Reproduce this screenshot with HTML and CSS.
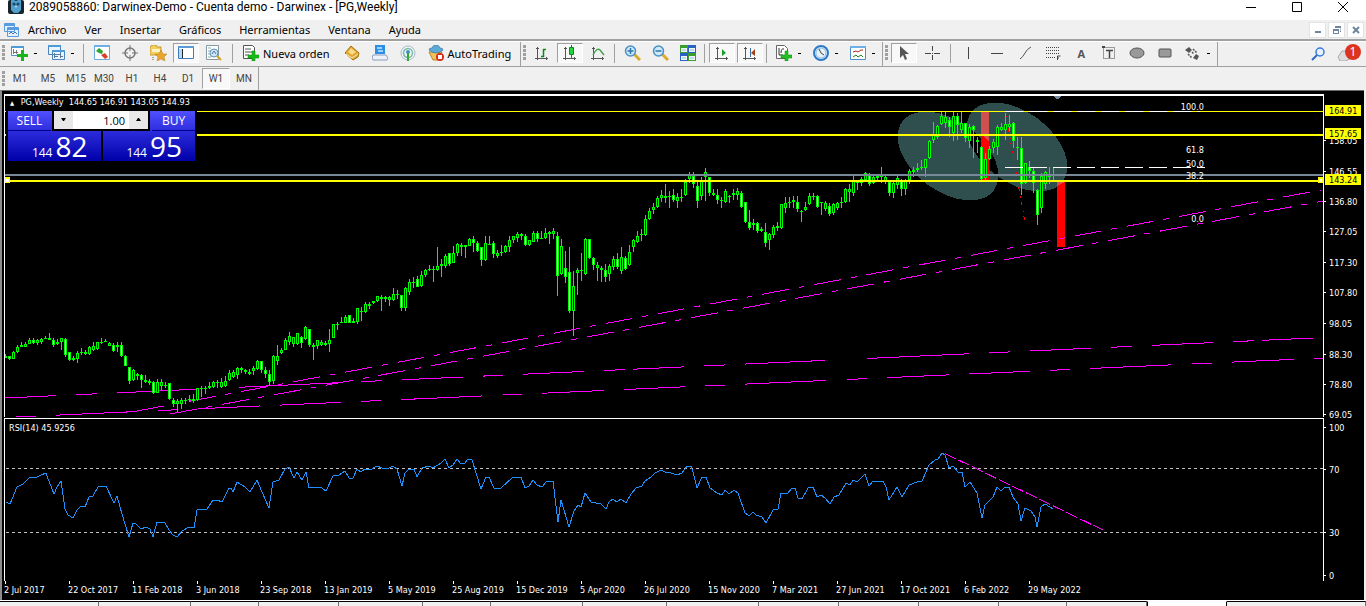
FILE: index.html
```html
<!DOCTYPE html>
<html lang="es">

<head>
    <meta charset="UTF-8">
    <meta name="viewport" content="width=device-width, initial-scale=1.0">
    <title>Darwinex - [PG,Weekly]</title>

    <link rel="stylesheet" href="styles.css">
</head>

<body>
    <div id="app">
        <header class="titlebar">
            <svg class="logo" width="16" height="14" viewBox="0 0 16 14">
                <rect width="16" height="14" rx="2" fill="#17242e"/>
                <path d="M3 0h3l2 1 2-1h3v10l-3 3H6l-3-3z" fill="#4f9ecb"/>
                <circle cx="6" cy="4" r="1.6" fill="#1d4a68"/><circle cx="10" cy="4" r="1.6" fill="#1d4a68"/>
                <path d="M7 6h2l-1 2z" fill="#d8eef8"/>
            </svg>
            <h1>2089058860: Darwinex-Demo - Cuenta demo - Darwinex - [PG,Weekly]</h1>
            <div class="window-buttons">
                <button aria-label="Minimizar"><svg width="10" height="10"><path d="M0 5.5h10" stroke="#000"/></svg></button>
                <button aria-label="Maximizar"><svg width="10" height="10"><path d="M.5 .5h9v9h-9z" fill="none" stroke="#000"/></svg></button>
                <button aria-label="Cerrar"><svg width="10" height="10"><path d="M0 0l10 10M10 0L0 10" stroke="#000"/></svg></button>
            </div>
        </header>

        <nav class="menubar">
            <svg class="menu-icon" width="15" height="14" viewBox="0 0 15 14">
                <path d="M.5 .5h10v8h-10zM3.5 4.5h11v9h-11z" fill="#e4f2ff" stroke="#5a9be0"/>
                <path d="M1 2h9M4 6h10" stroke="#5a9be0" stroke-width="2"/>
                <path d="M5 11l2-2 2 2 2-2 2 2" fill="none" stroke="#3f76c0"/>
            </svg>
            <button>Archivo</button>
            <button>Ver</button>
            <button>Insertar</button>
            <button>Gráficos</button>
            <button>Herramientas</button>
            <button>Ventana</button>
            <button>Ayuda</button>
            <div class="mdi-buttons">
                <button aria-label="Minimizar gráfico"><svg width="8" height="8"><path d="M1 6h6" stroke="#70859b" stroke-width="2"/></svg></button>
                <button aria-label="Restaurar gráfico"><svg width="8" height="8"><path d="M2 .5h6v5h-1M2 1.5h6" fill="none" stroke="#70859b"/><path d="M0 3h6v5H0z" fill="#70859b"/><path d="M1 5h4v2H1z" fill="#fff"/></svg></button>
                <button aria-label="Cerrar gráfico"><svg width="8" height="8"><path d="M1 1l6 6M7 1L1 7" stroke="#70859b" stroke-width="2"/></svg></button>
            </div>
        </nav>

        <div class="toolbar">
            <div class="group">
                <i class="grip"></i>
                <button class="tool drop" aria-label="Nuevo gráfico"><svg width="17" height="16"><path d="M.5 1.500h12v9H.5z" fill="#fff" stroke="#5590c4"/><path d="M0 2h13" stroke="#4f9bd8" stroke-width="2"/><path d="M2.500 4v5M2 7.500h5M5.500 5v4" stroke="#777"/><path d="M10 5h3v4h4v3h-4v4h-3v-4H6V9h4z" fill="#17b517"/></svg></button>
                <button class="tool drop" aria-label="Perfiles"><svg width="17" height="16"><path d="M.5 .5h12v9H.5zM4.500 5.500h12v9h-12z" fill="#eaf4fc" stroke="#4a85c0"/><path d="M0 1h13M4 6h13" stroke="#4f9bd8" stroke-width="2"/><path d="M6.500 8v5M6 11.500h4M12.500 9v4M12 11.500h3" fill="none" stroke="#5b7890"/></svg></button>
                <i class="sep"></i>
                <button class="tool" aria-label="Observación del mercado"><svg width="16" height="16"><path d="M.5 .5h15v14H.5z" fill="#fff" stroke="#6fa9dc"/><path d="M0 1h16" stroke="#6fb0e6" stroke-width="2"/><path d="M2 6l3-3 4 3-1 3-3-1z" fill="#2fa32f"/><path d="M7 10l4-2 3 4-3 2z" fill="#d6402a"/></svg></button>
                <button class="tool" aria-label="Ventana de datos"><svg width="16" height="16"><circle cx="8" cy="8" r="5" fill="none" stroke="#777" stroke-width="1.500"/><path d="M8 0v6M8 10v6M0 8h6M10 8h6" stroke="#777"/></svg></button>
                <button class="tool" aria-label="Navegador"><svg width="17" height="16"><path d="M0 2l2-2h4l1 2h4v8H0z" fill="#f3cf61" stroke="#c79a2c"/><path d="M2 4h8v3H2z" fill="#fff4bf"/><path d="M11 5l2 4h4l-3 3 1 4-4-2-4 2 1-4-3-3h4z" fill="#e9a52c" stroke="#b87a18" stroke-width=".5"/><path d="M3 12v3" stroke="#555" stroke-dasharray="1"/></svg></button>
                <button class="tool pressed" aria-label="Terminal"><svg width="16" height="14"><path d="M.5 .5h15v12H.5z" fill="#fff" stroke="#3e7cc0"/><path d="M0 1h16" stroke="#5b9ad6" stroke-width="2"/><path d="M4.500 3v9" stroke="#222"/><path d="M1 3h3v9H1z" fill="#b7d7f2"/></svg></button>
                <button class="tool" aria-label="Probador de estrategias"><svg width="16" height="16"><path d="M.5 .5h12v14H.5z" fill="#fff" stroke="#8899a5"/><path d="M2 3h3M2 6h3M2 9h2M2 12h3" stroke="#8aa"/><circle cx="8" cy="8" r="4" fill="#cfe6f7" stroke="#5d92b8"/><path d="M6 9l2-3 2 3" fill="none" stroke="#4878a0"/><path d="M11 11l4 4" stroke="#d9a21b" stroke-width="2"/></svg></button>
                <i class="sep"></i>
                <button class="tool wide"><svg width="16" height="16"><path d="M.5 .5h9l2 2v11H.5z" fill="#fff" stroke="#555"/><path d="M2 4h6M2 7h7M2 10h4" stroke="#555"/><path d="M9 6h3v4h4v3h-4v3H9v-3H5v-3h4z" fill="#16bb16" stroke="#0b8a0b" stroke-width=".5"/></svg>Nueva orden</button>
                <button class="tool" aria-label="MetaEditor"><svg width="16" height="16"><path d="M1 8l6-7 8 7-1 4-5 3z" fill="#e0a62e" stroke="#a8700f"/><path d="M4 7l3-4 5 4-4 3z" fill="#fbd985"/><path d="M2 9l6 4 6-4" fill="none" stroke="#fff1c0"/></svg></button>
                <button class="tool" aria-label="Equipo"><svg width="16" height="16"><path d="M3 0h10v9H3z" fill="#2b8fe8"/><path d="M5 2h5v2H5zM6 5h5v2H6z" fill="#9fd3fa"/><path d="M1 10h13l2 3-1 2H1l-1-2z" fill="#eef2f8" stroke="#8a9cc0"/></svg></button>
                <button class="tool" aria-label="Señales"><svg width="16" height="16"><circle cx="8" cy="8" r="7" fill="#eef5f5" stroke="#a9bcc6"/><circle cx="8" cy="8" r="4.500" fill="none" stroke="#7fb7a5" stroke-width="1.500"/><circle cx="8" cy="7" r="2" fill="#3c8fd0"/><path d="M8 8v8" stroke="#36a83a" stroke-width="2"/></svg></button>
                <button class="tool wide"><svg width="16" height="16"><path d="M1 7h13l-3 8H5z" fill="#f2c25a" stroke="#b98324"/><path d="M1 5q0-2 3-2 1-3 4-3t4 3q3 0 3 2-3 3-7 3T1 5z" fill="#5fa9d6" stroke="#35779f" stroke-width=".7"/><circle cx="12" cy="12" r="4" fill="#d92b1c"/><path d="M10 10h4v4h-4z" fill="#fff"/></svg>AutoTrading</button>
            </div>
            <div class="group">
                <i class="grip"></i>
                <button class="tool" aria-label="Barras"><svg width="16" height="16"><use href="#axes"/><path d="M9.500 4v8M9 4.500h3M7 11.500h3" stroke="#0a8a1a" stroke-width="1.500"/></svg></button>
                <button class="tool pressed" aria-label="Velas"><svg width="16" height="16"><use href="#axes"/><path d="M9.500 0v13" stroke="#0a8a1a"/><path d="M7.500 2.500h4v7h-4z" fill="#26d43c" stroke="#0a8a1a"/></svg></button>
                <button class="tool" aria-label="Línea"><svg width="16" height="16"><use href="#axes"/><path d="M3 10q4-8 7-5l4 5" fill="none" stroke="#45a04f" stroke-width="1.500"/></svg></button>
                <i class="sep narrow"></i>
                <button class="tool" aria-label="Acercar"><svg width="17" height="16"><path d="M10 9l6 6" stroke="#d9ac2b" stroke-width="3"/><circle cx="6.500" cy="6" r="5" fill="#cfe9fb" stroke="#4a90c2" stroke-width="1.500"/><path d="M3.500 6h6M6.500 3v6" stroke="#2d77ad" stroke-width="1.500"/></svg></button>
                <button class="tool" aria-label="Alejar"><svg width="17" height="16"><path d="M10 9l6 6" stroke="#d9ac2b" stroke-width="3"/><circle cx="6.500" cy="6" r="5" fill="#cfe9fb" stroke="#4a90c2" stroke-width="1.500"/><path d="M3.500 6h6" stroke="#2d77ad" stroke-width="1.500"/></svg></button>
                <button class="tool" aria-label="Mosaico"><svg width="16" height="16"><path d="M0 0h8v8H0z" fill="#3a9d2c"/><path d="M8 0h8v8H8z" fill="#2962c4"/><path d="M0 8h8v8H0z" fill="#2962c4"/><path d="M8 8h8v8H8z" fill="#3a9d2c"/><path d="M1 3h6v4H1zM9 3h6v4H9zM1 11h6v4H1zM9 11h6v4H9z" fill="#eef6ff"/><path d="M2 5h4M10 5h4M2 13h4M10 13h4" stroke="#9bc" /></svg></button>
                <i class="sep narrow"></i>
                <button class="tool pressed" aria-label="Desplazar"><svg width="16" height="16"><use href="#axes"/><path d="M8 4v7l4-3z" fill="#18a02a"/></svg></button>
                <button class="tool pressed" aria-label="Autodesplazar"><svg width="16" height="16"><use href="#axes"/><path d="M8.500 3v9" stroke="#3a6ea5"/><path d="M13 4v7l-4-3z" fill="#a5401c"/></svg></button>
                <i class="sep narrow"></i>
                <button class="tool drop" aria-label="Indicadores"><svg width="16" height="16"><path d="M.5 .5h8l3 3v10H.5z" fill="#fff" stroke="#666"/><path d="M3 3v7h4M5 8q0-5 3-4" fill="none" stroke="#333"/><path d="M9 6h3v4h4v3h-4v3H9v-3H5v-3h4z" fill="#1fc421" stroke="#0b8a0b" stroke-width=".5"/></svg></button>
                <button class="tool drop" aria-label="Períodos"><svg width="16" height="16"><circle cx="8" cy="8" r="7" fill="#e8f2fa" stroke="#2c79c9" stroke-width="2"/><circle cx="8" cy="8" r="5" fill="none" stroke="#8cbbe3"/><path d="M6 4l2 4 3 2" fill="none" stroke="#444"/></svg></button>
                <button class="tool drop" aria-label="Plantillas"><svg width="16" height="14"><path d="M.5 .5h15v13H.5z" fill="#fff" stroke="#4c8fcb"/><path d="M0 1h16" stroke="#6fb0e6" stroke-width="2"/><path d="M3 6l3-1 2 1 3-2h2" fill="none" stroke="#a3301c"/><path d="M3 11l3-2 2 2 3-2 2 2" fill="none" stroke="#15851e"/></svg></button>
            </div>
            <div class="group">
                <i class="grip"></i>
                <button class="tool pressed" aria-label="Cursor"><svg width="16" height="16"><path d="M4 1v12l3-3 2 5 2-1-2-5h4z" fill="#555"/></svg></button>
                <button class="tool" aria-label="Cruz"><svg width="16" height="16"><path d="M8.500 1v5M8.500 10v5M1 8.500h6M10 8.500h6M8 8.500h1" stroke="#444"/></svg></button>
                <i class="sep"></i>
                <button class="tool" aria-label="Línea vertical"><svg width="16" height="16"><path d="M7.500 2v12" stroke="#444"/></svg></button>
                <button class="tool" aria-label="Línea horizontal"><svg width="16" height="16"><path d="M2 8.500h12" stroke="#444"/></svg></button>
                <button class="tool" aria-label="Línea de tendencia"><svg width="16" height="16"><path d="M3 14q3-2 5-6t6-6" fill="none" stroke="#555"/></svg></button>
                <button class="tool" aria-label="Fibonacci"><svg width="16" height="16"><path d="M1 2.500h14M1 5.500h14M1 8.500h14M1 12.500h9" stroke="#444" stroke-dasharray="1 1"/><path d="M12.500 15v-4h3M12 13h2" fill="none" stroke="#444"/></svg></button>
                <button class="tool letter">A</button>
                <button class="tool" aria-label="Etiqueta de texto"><svg width="16" height="16"><path d="M2.500 2.500h11v11h-11z" fill="none" stroke="#444" stroke-dasharray="1 1"/><path d="M5 5.500h7M8.500 5v8" stroke="#444" stroke-width="1.500"/><path d="M1 1h3v2H1z" fill="#444"/></svg></button>
                <button class="tool" aria-label="Elipse"><svg width="16" height="16"><ellipse cx="8" cy="8" rx="7" ry="5" fill="#999" stroke="#555"/></svg></button>
                <button class="tool" aria-label="Rectángulo"><svg width="16" height="16"><rect x="2" y="4" width="12" height="8" rx="1" fill="#999" stroke="#555"/></svg></button>
                <button class="tool drop" aria-label="Flechas"><svg width="16" height="16"><path d="M4 2l3 3-3 3-4-3zM11 9l3 2-2 4-4-2z" fill="#555"/><path d="M3 9l4 4M8 4l4 4M7 7l2 2" stroke="#555" stroke-width="1.500" stroke-dasharray="2 1"/></svg></button>
            </div>
            <div class="status">
                <button class="tool" aria-label="Buscar"><svg width="16" height="16"><circle cx="9" cy="6" r="4" fill="#e5f1ff" stroke="#3a78d8" stroke-width="1.500"/><path d="M6 9l-5 5" stroke="#2f67c4" stroke-width="2"/></svg></button>
                <button class="tool alerts" aria-label="Alertas"><svg width="20" height="14"><path d="M1 10l4-6h9v7l-5 3H3z" fill="#ddd" stroke="#aaa"/></svg><span class="badge">1</span></button>
            </div>
        </div>

        <div class="timeframes">
            <i class="grip"></i>
            <button>M1</button>
            <button>M5</button>
            <button>M15</button>
            <button>M30</button>
            <button>H1</button>
            <button>H4</button>
            <button>D1</button>
            <button class="pressed">W1</button>
            <button>MN</button>
        </div>

        <main class="chart">
            <svg class="plot" shape-rendering="crispEdges">
                <defs>
                    <g id="axes"><path d="M3.500 2v13M1 13.500h13M2 3.500h3M12.500 12v3" stroke="#555" fill="none"/></g>
                </defs>
                <g transform="translate(-4 -94)">
                    <!-- ellipses, overlap stays black -->
                    <path d="M902 122A57 35 37 1 1 994 190A57 35 37 1 1 902 122ZM971 113A57 35 37 1 1 1063 181A57 35 37 1 1 971 113Z" fill="#2f4f4f" fill-rule="evenodd"/>
                    <path d="M981 112h8v68h-8zM1057 182h8v65h-8z" fill="#f00"/>
                    <path d="M981 112h8v30l-8-8zM1057 182h8l-8 4z" fill="#d05050"/>

                    <g id="trends" fill="none" stroke="#f0f"></g>
                    <path d="M1005.500 113l20 112" fill="none" stroke="#f00" stroke-dasharray="4 5 2 4"/>

                    <g id="candles"></g>

                    <!-- levels -->
                    <rect x="4" y="111" width="100%" height="1" fill="#ff0"/>
                    <path d="M1005 111.500h195" stroke="#fff" stroke-dasharray="18 6"/>
                    <rect x="4" y="134" width="100%" height="2" fill="#ff0"/>
                    <rect x="4" y="174" width="100%" height="2" fill="#778899"/>
                    <path d="M1005 167.500h200" stroke="#fff" stroke-dasharray="18 6"/>
                    <rect x="4" y="180" width="100%" height="2" fill="#ff0"/>
                    <path d="M5 177h5v6H5zM1318 177h5v6h-5z" fill="#ff0"/>
                    <path d="M6 179h3v3H6zM1319 179h3v3h-3z" fill="#fff"/>
                    <path d="M1053 96h9l-4 3h-1z" fill="#778899"/>

                    <g class="fibo">
                        <text x="1204" y="110">100.0</text>
                        <text x="1204" y="153">61.8</text>
                        <text x="1204" y="167">50.0</text>
                        <text x="1204" y="179">38.2</text>
                        <text x="1204" y="222">0.0</text>
                    </g>

                    <!-- frame -->
                    <rect x="4" y="94" width="100%" height="2" fill="#fff"/>
                    <rect x="4" y="94" width="1" height="323" fill="#fff"/>
                    <rect x="4" y="418" width="100%" height="1" fill="#fff"/>
                    <rect x="4" y="418" width="1" height="163" fill="#fff"/>

                    <!-- RSI -->
                    <svg x="6" y="420" width="100%" height="160">
                        <path d="M0 48.500h4000M0 112.500h4000" stroke="#c0c0c0" stroke-dasharray="3 3"/>
                    </svg>
                    <polyline id="rsi" fill="none" stroke="#1e90ff"/>
                    <path d="M945 453.500L1103 530" stroke="#f0f" stroke-dasharray="12 3"/>
                    <text x="9" y="431">RSI(14) 45.9256</text>

                    <g id="dates"></g>
                </g>
            </svg>

            <svg class="scale" shape-rendering="crispEdges">
                <g id="prices" transform="translate(0 -94)">
                    <path d="M0 94h1v323H0zM0 418h1v163H0z" fill="#fff"/>
                </g>
            </svg>

            <section class="oneclick">
                <p class="symbol"><span class="arrow">▲</span> PG,Weekly&nbsp; 144.65 146.91 143.05 144.93</p>
                <div class="deal">
                    <button class="side sell"><span>SELL</span><b><small>144</small>82</b></button>
                    <button class="side buy"><span>BUY</span><b><small>144</small>95</b></button>
                    <div class="volume">
                        <button class="step" aria-label="Bajar volumen"><svg width="5" height="4"><path d="M0 0h5L3 3H2z"/></svg></button>
                        <input type="text" value="1.00" aria-label="Volumen">
                        <button class="step" aria-label="Subir volumen"><svg width="5" height="4"><path d="M2 0h1l2 3H0z"/></svg></button>
                    </div>
                </div>
            </section>
        </main>

        <footer class="tabs" id="tabs"></footer>
    </div>

    <script src="script.js"></script>
</body>

</html>
```
FILE: styles.css
```css
* {
    padding: 0;
    margin: 0;
    box-sizing: border-box;
}

body {
    font-family: "Noto Sans", "Open Sans", sans-serif;
    font-size: 11px;
    color: #000;
    overflow: hidden;
}

button {
    border: 0;
    background: none;
    font: inherit;
    color: inherit;
}

svg {
    display: block;
    flex: none;
}

#app {
    height: 100vh;
    display: flex;
    flex-direction: column;
    background-color: #f0f0f0;
}

/* title bar */

.titlebar {
    height: 20px;
    flex: none;
    display: flex;
    align-items: flex-start;
    padding-left: 8px;
    background-color: #fff;
}

.titlebar h1 {
    margin-left: 5px;
    font-family: Roboto, sans-serif;
    font-size: 12px;
    line-height: 14px;
    font-weight: normal;
}

.window-buttons {
    margin-left: auto;
    display: flex;
}

.window-buttons button {
    width: 46px;
    height: 14px;
    display: flex;
    align-items: center;
    justify-content: center;
}

/* menu */

.menubar {
    height: 21px;
    flex: none;
    display: flex;
    align-items: center;
    padding-left: 4px;
    border-bottom: 2px solid #a0a0a0;
}

.menubar>button {
    padding: 0 9px;
    line-height: 18px;
}

.mdi-buttons {
    margin-left: auto;
    margin-right: 2px;
    display: flex;
    gap: 2px;
}

.mdi-buttons button {
    width: 17px;
    height: 16px;
    display: flex;
    align-items: center;
    justify-content: center;
    background-color: #fff;
    border: 1px solid #e3e3e3;
}

/* toolbars */

.toolbar {
    height: 26px;
    flex: none;
    display: flex;
    border-top: 1px solid #fff;
    border-bottom: 1px solid #a0a0a0;
}

.group {
    display: flex;
    align-items: center;
    padding-right: 1px;
    padding-bottom: 2px;
    border-right: 1px solid #a0a0a0;
}

.grip {
    width: 3px;
    height: 16px;
    margin: 0 2px;
    background: repeating-linear-gradient(#a0a0a0 0 3px, transparent 3px 4px);
}

.group:first-child .grip {
    margin-right: 0;
}

.tool {
    width: 28px;
    height: 20px;
    display: flex;
    align-items: center;
    justify-content: center;
}

.tool.drop {
    width: 37px;
    justify-content: flex-start;
    padding-left: 6px;
    gap: 6px;
}

.tool.drop::after {
    content: "";
    width: 3px;
    height: 1px;
    background-color: #000;
}

.tool.wide {
    width: auto;
    padding: 0 8px 0 6px;
    gap: 4px;
}

.tool.letter {
    font-weight: bold;
    color: #555;
}

.tool.pressed {
    width: 26px;
    margin: 0 1px;
}

.pressed {
    background-color: #f8f8f8;
    border: 1px solid #fff;
    border-top-color: #a0a0a0;
    border-left-color: #a0a0a0;
}

.sep {
    width: 1px;
    height: 19px;
    margin: 0 4px;
    background-color: #a0a0a0;
}

.sep.narrow {
    margin: 0 3px 0 2px;
}

.status {
    margin-left: auto;
    margin-right: 5px;
    display: flex;
    align-items: center;
}

.alerts {
    position: relative;
}

.badge {
    position: absolute;
    right: 0;
    top: 0;
    width: 16px;
    height: 16px;
    border-radius: 8px;
    background-color: #dd3420;
    color: #fff;
    font-size: 12px;
    line-height: 15px;
    text-align: center;
}

.timeframes {
    height: 23px;
    flex: none;
    display: flex;
    align-items: center;
    align-self: flex-start;
    border-right: 1px solid #a0a0a0;
    font-family: Roboto, sans-serif;
    font-size: 10px;
    color: #444;
}

.timeframes .grip {
    margin-right: 1px;
}

.timeframes button {
    width: 28px;
    height: 21px;
}

/* chart */

.chart {
    flex: 1;
    min-height: 0;
    display: flex;
    position: relative;
    padding: 3px 0 0 2px;
    margin-right: 2px;
    background-color: #000;
    border-top: 1px solid #696969;
    border-left: 2px solid #8c8c8c;
    font-family: "DejaVu Sans Condensed", "DejaVu Sans", sans-serif;
    font-size: 9px;
    color: #fff;
}

.chart text {
    fill: #fff;
}

.plot {
    flex: 1;
    min-width: 0;
    height: 100%;
}

.scale {
    width: 41px;
    height: 100%;
}

.chart .fibo text {
    text-anchor: end;
}

.chart .mark text {
    fill: #000;
}

.oneclick {
    position: absolute;
    left: 2px;
    top: 5px;
}

.symbol {
    height: 15px;
    line-height: 12px;
    padding-left: 6px;
}

.arrow {
    font-size: 6px;
    margin-right: 4px;
}

.deal {
    display: flex;
    gap: 2px;
    width: 191px;
    margin-left: 2px;
    padding: 0 2px 2px;
    background-color: #000;
    font-family: "Open Sans", sans-serif;
}

.side {
    flex: 1;
    height: 50px;
    display: flex;
    flex-direction: column;
    background: linear-gradient(#5050ff, #2828d8 45%, #0000a8);
    color: #fff;
}

.side span {
    width: 43px;
    height: 20px;
    line-height: 20px;
    font-size: 12px;
    border-bottom: 1px solid #000090;
}

.buy span {
    align-self: flex-end;
}

.side b {
    align-self: flex-end;
    padding-right: 13px;
    font-size: 28px;
    line-height: 30px;
    font-weight: normal;
}

.side small {
    font-size: 12px;
    margin-right: 3px;
}

.volume {
    position: absolute;
    left: 48px;
    top: 15px;
    width: 98px;
    height: 20px;
    display: flex;
    padding: 0 2px 2px;
    background-color: #000;
}

.step {
    width: 19px;
    display: flex;
    align-items: center;
    justify-content: center;
    background-color: #e8e8e8;
}

.volume input {
    flex: 1;
    min-width: 0;
    border: 0;
    padding-right: 4px;
    background-color: #fff;
    font-family: "Open Sans", sans-serif;
    font-size: 11px;
    text-align: right;
}

/* chart tabs */

.tabs {
    height: 6px;
    flex: none;
    display: flex;
    border-top: 1px solid #fff;
}

.tabs span {
    flex: none;
    border-top: 1px solid #000;
    border-right: 1px solid #707070;
}

.tabs .active {
    background-color: #fff;
    border-top-color: #fff;
    border-right: 1px solid #000;
    border-left: 1px solid #000;
}

.tabs .rest {
    flex: 1;
}
```
FILE: script.js
```js
const $ = document.querySelector.bind(document)

// high, open/close top, open/close bottom, low; "w" marks a falling candle
const candles = `354,356,358,358 356,356,359,360w 351,352,359,359 345,347,352,353 342,345,347,347 342,344,347,347
338,340,344,344 338,340,343,344w 339,340,343,345 338,339,342,344 336,338,339,339 333,338,340,340
338,340,345,347w 339,342,344,345 338,338,342,350 338,339,355,357w 352,352,360,361w 356,358,360,361
351,353,359,363 348,352,353,355 350,352,354,355 346,347,354,355 342,346,350,351 342,342,349,350
338,342,342,344 339,341,341,342 342,343,346,346 343,345,351,352w 342,345,347,352 342,345,356,357w
355,356,366,366w 367,367,381,384w 369,370,380,381 373,374,376,380 374,375,380,388w 375,380,382,383
379,381,383,385 381,382,393,394w 379,382,393,393 379,382,386,390 382,385,386,388 383,383,399,400w
398,400,404,407w 399,401,404,412 398,400,404,409 398,400,401,404 395,399,400,402 394,399,401,403
388,388,400,401 386,388,389,397 386,388,389,394 382,386,388,389 381,382,387,388 380,382,383,388
378,382,387,388 376,381,386,387 370,373,380,381 370,372,377,378 367,368,375,379 367,368,370,373
369,370,372,374 369,372,374,375 366,368,371,375 360,361,369,370 361,361,370,373w 367,370,374,378w
370,374,382,386w 355,356,381,384 345,356,361,365 348,350,353,354 338,340,350,350 332,336,342,345
337,337,344,347 333,333,344,345 336,337,343,348w 326,327,339,340 329,329,345,347w 343,345,347,360
340,340,346,349 340,342,345,346 341,343,345,346 329,340,344,352 324,324,338,338 322,324,325,330
317,322,323,323 315,317,323,323 315,315,323,323w 318,321,323,323 308,308,322,324 307,311,311,321
302,304,312,313 302,304,306,309 301,301,303,304 296,296,301,302 295,297,299,311 296,297,299,302
296,297,300,306 288,294,300,301 290,294,295,299 295,295,308,311w 287,288,308,311 279,282,292,295
277,282,282,288 276,279,287,287w 271,275,286,287 269,270,275,277 265,269,270,271 266,269,270,282
247,266,270,271 259,264,266,277 254,256,266,268 253,253,264,266w 246,253,263,263 243,244,253,256
243,245,247,256 245,245,247,258 238,239,246,246 236,239,243,252w 241,243,251,252w 247,247,260,266w
236,243,260,261 236,244,244,245 241,243,254,258w 250,253,256,258 245,252,253,256 245,246,252,253
236,240,247,252 236,236,240,243 232,234,238,242 233,234,236,240 234,236,245,246w 240,240,245,246
231,233,242,242 231,233,239,242w 231,238,239,239 228,233,238,239 231,232,234,244 228,231,234,239
232,236,276,296w 239,246,274,275 251,268,277,283w 247,272,311,313w 271,286,311,336 268,270,273,295
253,270,270,281 238,239,274,275 239,239,258,259w 257,258,265,270w 262,265,268,281 266,268,270,282
264,270,277,282w 264,266,274,281 256,259,267,270 253,259,267,269w 247,257,271,274 256,258,269,270w
245,252,265,266 239,240,247,252 231,236,242,243 229,234,235,241 215,219,235,236 208,211,219,220
203,207,210,214 196,198,207,208 190,195,198,202 184,196,198,203 191,196,196,208 189,195,200,202w
193,197,201,208 189,197,197,202 179,182,195,196 172,174,179,183 172,176,184,188w 182,186,201,208w
177,181,196,200 168,172,177,201 177,177,193,196w 189,193,195,196 189,195,200,204w 197,200,201,208
189,191,202,203 195,196,197,203 189,193,195,200 188,191,195,200 191,193,207,208w 202,202,222,223w
210,222,228,230w 219,223,225,230 222,223,231,233w 227,229,231,232 223,232,243,247w 233,234,240,250
225,227,235,238 222,226,228,231 204,204,228,229 197,203,208,213 197,202,202,208 196,200,202,208
196,202,209,212w 210,211,212,222 202,207,210,211 193,196,204,205 193,196,197,200 195,196,207,208w
202,202,203,215 201,203,209,211 203,206,214,216w 203,204,213,215 202,203,208,210 197,202,203,208
188,189,202,203 184,189,192,202 176,181,193,196 180,182,183,190 177,179,183,186 172,173,180,180
173,174,184,186w 175,177,183,184 174,176,178,182 167,175,177,183 174,177,182,184 181,182,193,196w
182,183,193,198 174,178,185,189 179,180,189,196w 179,180,189,195 169,171,180,184 167,170,172,177
163,168,170,172 160,167,167,170 159,159,168,177 140,141,158,159 122,135,140,143 125,126,137,139
112,116,124,125 112,117,123,128 117,120,127,137w 112,116,133,141 113,116,125,140w 112,123,130,133
123,123,138,142w 124,127,141,148 125,126,130,158w 137,140,142,153 146,147,179,181w 153,159,178,180
146,149,159,160 139,142,148,153 125,127,147,155 123,127,130,131 113,124,130,140 115,124,127,131
122,123,141,148w 137,147,148,160 137,148,184,195w 163,163,183,184 161,167,171,178w 168,171,183,193w
189,190,215,225w 173,176,208,213 171,172,184,189 167,174,177,184 167,174,176,180`.split(/\s+/)

const rsi = `6,502 10,504 17,487 23,484 30,477 37,477 41,475 46,473 47,476 54,494 57,487 61,481 65,509 68,515 73,518
77,510 81,506 85,507 89,497 93,496 98,487 106,486 114,503 117,496 122,514 129,537 133,523 135,523 141,529 146,527
150,529 153,537 157,522 165,523 169,530 173,535 177,537 182,531 189,527 194,528 197,510 207,509 213,500 217,500
222,502 229,488 231,488 233,492 237,482 245,487 250,492 257,480 262,492 269,508 273,482 279,480 285,469 289,467
294,478 297,472 302,480 306,472 309,488 317,487 322,488 326,491 333,476 339,475 345,471 349,478 353,478 357,469
361,472 365,469 370,470 377,466 382,468 389,468 393,466 397,469 402,486 405,473 409,469 414,469 417,477 422,468
429,466 433,468 441,463 445,459 449,468 453,465 457,459 461,464 465,463 468,459 472,460 481,489 486,477 489,477
494,488 501,488 513,477 521,477 525,488 529,486 533,480 537,485 542,487 546,482 553,481 558,522 561,500 569,527
574,511 578,505 581,507 585,493 591,502 601,504 606,509 609,502 613,499 617,502 621,499 626,503 631,494 636,488
642,486 645,481 651,477 655,473 661,470 665,472 671,473 677,475 682,473 687,466 691,466 693,472 697,488 702,477
706,477 710,488 717,493 722,495 725,490 729,494 734,490 738,493 745,513 749,516 753,512 756,515 762,517 766,523
773,510 778,509 781,493 787,494 792,488 795,488 798,498 802,499 808,488 813,487 817,497 821,495 825,498 830,504
834,497 839,495 846,483 850,485 853,480 857,482 865,474 869,486 873,481 883,481 886,487 889,500 897,487 902,497
909,485 917,482 922,481 929,465 935,460 938,459 942,453 945,455 949,468 953,466 958,472 962,472 965,487 970,482
977,493 982,518 985,505 993,497 997,487 1001,491 1005,487 1009,487 1013,497 1018,504 1021,521 1025,508 1031,511
1035,517 1037,527 1041,507 1045,504 1050,507 1053,509`

const trends = [
    { from: [137, 411], to: [1321, 190], dash: '27 10 6 10' },
    { from: [170, 414], to: [1323, 201], dash: '27 10 6 10' },
    { from: [5, 398], to: [1313, 338], dash: '51 20 21 20 80 42 102 20 21 20 61 20 21 20 61 20 21 8' },
    { from: [16, 417], to: [1323, 358], dash: '20 20 81 21 20 20 62 20 61 20' }
]

const dates = ['2 Jul 2017', '22 Oct 2017', '11 Feb 2018', '3 Jun 2018', '23 Sep 2018', '13 Jan 2019', '5 May 2019',
    '25 Aug 2019', '15 Dec 2019', '5 Apr 2020', '26 Jul 2020', '15 Nov 2020', '7 Mar 2021', '27 Jun 2021',
    '17 Oct 2021', '6 Feb 2022', '29 May 2022']

const prices = [['158.05', 140], ['146.55', 171], ['136.80', 201], ['127.05', 231], ['117.30', 262], ['107.80', 292],
    ['98.05', 323], ['88.30', 354], ['78.80', 384], ['69.05', 414], ['100', 427], ['70', 469], ['30', 532], ['0', 575]]

const marks = [['164.91', 111], ['157.65', 134], ['143.24', 180]]

const tabs = [99, 92, 68, 80, 84, 68, 92, 84, 92, 80, 80, 80, 68, 80, 80]

function drawCandles() {
    let green = ''
    let white = ''
    let black = ''

    candles.forEach((candle, i) => {
        const [high, top, bottom, low] = candle.split(',').map(parseFloat)
        const x = 5 + i * 4
        const height = Math.max(bottom - top, 1)

        green += `M${x} ${high}h1v${Math.max(low - high, 1)}h-1z`
        green += `M${x - 1} ${top}h3v${height}h-3z`

        if (height > 2) {
            const core = `M${x} ${top + 1}h1v${height - 2}h-1z`
            candle.endsWith('w') ? white += core : black += core
        }
    })

    $('#candles').innerHTML = `<path d="${green}" fill="#0f0"/><path d="${white}" fill="#fff"/><path d="${black}" fill="#000"/>`
}

function drawTrends() {
    $('#trends').innerHTML = trends.map(({ from, to, dash }) =>
        `<path d="M${from}L${to}" stroke-dasharray="${dash}"/>`).join('')
}

function drawDates() {
    $('#dates').innerHTML = dates.map((date, i) => {
        const x = 5 + i * 64
        return `<path d="M${x} 581h1v3h-1z" fill="#fff"/><text x="${x - 1}" y="593">${date}</text>`
    }).join('')
}

function drawPrices() {
    const labels = prices.map(([price, y]) =>
        `<path d="M1 ${y}h2v1h-2z" fill="#fff"/><text x="6" y="${y + 4}">${price}</text>`)

    const boxes = marks.map(([price, y]) =>
        `<g class="mark"><path d="M2 ${y - 6}h36v11h-36z" fill="#ff0"/><text x="6" y="${y + 3}">${price}</text></g>`)

    $('#prices').innerHTML += labels.join('') + boxes.join('')
}

function drawTabs() {
    $('#tabs').innerHTML = tabs.map((width, i) =>
        `<span${i === tabs.length - 1 ? ' class="active"' : ''} style="width: ${width}px"></span>`).join('') + '<span class="rest"></span>'
}

$('#rsi').setAttribute('points', rsi)
drawCandles()
drawTrends()
drawDates()
drawPrices()
drawTabs()
```
